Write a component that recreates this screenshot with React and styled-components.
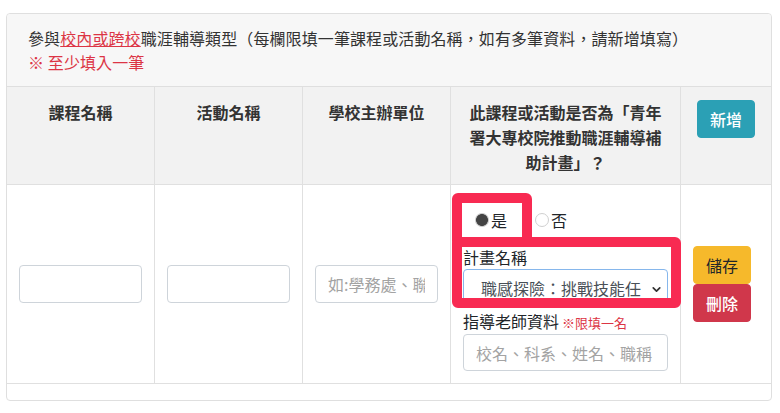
import React from "react";
import styled, { createGlobalStyle } from "styled-components";
import { ChevronDown } from "lucide-react";

const GlobalStyle = createGlobalStyle`
  html, body { margin: 0; padding: 0; background: #fff; }
  body {
    font-family: "Noto Sans CJK TC", "Noto Sans", "Liberation Sans", sans-serif;
    font-size: 16px;
    color: #212529;
  }
  * { box-sizing: border-box; }
`;

const Page = styled.div`
  padding: 13px 8px 0 6px;
`;

const Card = styled.div`
  border: 1px solid #dfdfdf;
  border-radius: 4px;
  background: #fff;
`;

const CardHeader = styled.div`
  background: #f7f7f7;
  padding: 12px 20px 12px 21px;
  border-bottom: 1px solid #dfdfdf;
  line-height: 24px;
  font-size: 16px;
  color: #333;
  letter-spacing: 0.1px;
  border-radius: 4px 4px 0 0;
`;

const RedLink = styled.span`
  color: #dc3545;
  text-decoration: underline;
`;

const Notice = styled.div`
  color: #dc3545;
`;

const Grid = styled.div`
  display: grid;
  grid-template-columns: 147px 148px 148px 230px 91px;
  margin-bottom: 16px;
`;

const HeadCell = styled.div`
  background: #f2f2f2;
  border-left: ${(p) => (p.$first ? "none" : "1px solid #e0e0e0")};
  border-bottom: 1px solid #e0e0e0;
  padding: 13px 12px 9px;
  text-align: center;
  font-weight: 700;
  line-height: 25px;
  font-size: 16px;
  color: #333;
`;

const BodyCell = styled.div`
  position: relative;
  border-left: ${(p) => (p.$first ? "none" : "1px solid #e0e0e0")};
  border-bottom: 1px solid #e0e0e0;
  padding: 12px;
  display: flex;
  flex-direction: column;
  justify-content: ${(p) => (p.$top ? "flex-start" : "center")};
  align-items: ${(p) => (p.$start ? "flex-start" : "stretch")};
`;

const TextInput = styled.input`
  display: block;
  width: 100%;
  height: ${(p) => (p.$h ? p.$h : "38px")};
  padding: 6px 12px;
  font-family: inherit;
  font-size: 16px;
  color: #495057;
  background: #fff;
  border: 1px solid #ced4da;
  border-radius: 4px;
  outline: none;
  &::placeholder { color: #a3a3a3; }
`;

const Button = styled.button`
  font-family: inherit;
  font-size: 16px;
  line-height: 24px;
  padding: 7px 12px;
  border: 1px solid ${(p) => p.$bg};
  background: ${(p) => p.$bg};
  color: ${(p) => p.$fg};
  border-radius: 4px;
  cursor: pointer;
  width: 58px;
  height: 38px;
  display: inline-flex;
  align-items: center;
  justify-content: center;
  font-weight: ${(p) => (p.$bold ? 500 : 400)};
`;

const RadioRow = styled.div`
  margin-top: 11px;
  height: 24px;
  display: flex;
  align-items: center;
  padding-left: 12px;
  line-height: 24px;
`;

const RadioOption = styled.label`
  display: inline-flex;
  align-items: center;
  margin-right: ${(p) => (p.$gap ? p.$gap : "0")};
`;

const RadioDot = styled.span`
  flex: none;
  width: 14px;
  height: 14px;
  border-radius: 50%;
  margin-right: 2px;
  ${(p) =>
    p.$checked
      ? `background: radial-gradient(circle, #444 0 5.6px, #c8c8c8 6.2px 7px);`
      : `border: 1px solid #d0d0d0; background: #fff;`}
`;

const FieldLabel = styled.div`
  line-height: ${(p) => (p.$lh ? p.$lh : "24px")};
  margin-top: ${(p) => (p.$mt ? p.$mt : "0")};
  color: #212529;
  white-space: nowrap;
`;

const SmallRed = styled.span`
  color: #dc3545;
  font-size: 13px;
  margin-left: 3px;
`;

const SelectWrap = styled.div`
  position: relative;
  height: 38px;
`;

const Select = styled.select`
  appearance: none;
  -webkit-appearance: none;
  width: 100%;
  height: 38px;
  padding: 0 22px 0 17px;
  font-family: inherit;
  font-size: 16px;
  color: #495057;
  background: #fff;
  border: 1px solid #86b7ec;
  border-radius: 4px;
  outline: none;
`;

const Chevron = styled.span`
  position: absolute;
  right: 5px;
  top: 14px;
  display: flex;
  color: #333;
  pointer-events: none;
`;

const Highlight = styled.div`
  position: absolute;
  left: ${(p) => p.$l}px;
  top: ${(p) => p.$t}px;
  width: ${(p) => p.$w}px;
  height: ${(p) => p.$h}px;
  border: 10px solid #f82a52;
  border-radius: 6px;
  pointer-events: none;
  z-index: 2;
`;

const ButtonStack = styled.div`
  display: flex;
  flex-direction: column;
`;

export default function App() {
  return (
    <>
      <GlobalStyle />
      <Page>
        <Card>
          <CardHeader>
            <div>
              參與<RedLink>校內或跨校</RedLink>職涯輔導類型（每欄限填一筆課程或活動名稱，如有多筆資料，請新增填寫）
            </div>
            <Notice>※ 至少填入一筆</Notice>
          </CardHeader>
          <Grid>
            <HeadCell $first>課程名稱</HeadCell>
            <HeadCell>活動名稱</HeadCell>
            <HeadCell>學校主辦單位</HeadCell>
            <HeadCell>此課程或活動是否為「青年署大專校院推動職涯輔導補助計畫」？</HeadCell>
            <HeadCell>
              <Button $bg="#2ba0b5" $fg="#fff" $bold>新增</Button>
            </HeadCell>

            <BodyCell $first>
              <TextInput />
            </BodyCell>
            <BodyCell>
              <TextInput />
            </BodyCell>
            <BodyCell>
              <TextInput placeholder="如:學務處、聯絡處" />
            </BodyCell>
            <BodyCell $top>
              <RadioRow>
                <RadioOption $gap="28px">
                  <RadioDot $checked />是
                </RadioOption>
                <RadioOption>
                  <RadioDot />否
                </RadioOption>
              </RadioRow>
              <FieldLabel $mt="13px">計畫名稱</FieldLabel>
              <SelectWrap>
                <Select defaultValue="a">
                  <option value="a">職感探險：挑戰技能任</option>
                </Select>
                <Chevron>
                  <ChevronDown size={13} strokeWidth={3.2} />
                </Chevron>
              </SelectWrap>
              <FieldLabel $mt="3px" $lh="22px">
                指導老師資料<SmallRed>※限填一名</SmallRed>
              </FieldLabel>
              <TextInput $h="37px" placeholder="校名、科系、姓名、職稱" />
              <Highlight $l={1} $t={8} $w={80} $h={54} />
              <Highlight $l={1} $t={52} $w={229} $h={71} />
            </BodyCell>
            <BodyCell $start>
              <ButtonStack>
                <Button $bg="#f6b92b" $fg="#212529">儲存</Button>
                <Button $bg="#d0374b" $fg="#fff" $bold>刪除</Button>
              </ButtonStack>
            </BodyCell>
          </Grid>
        </Card>
      </Page>
    </>
  );
}
